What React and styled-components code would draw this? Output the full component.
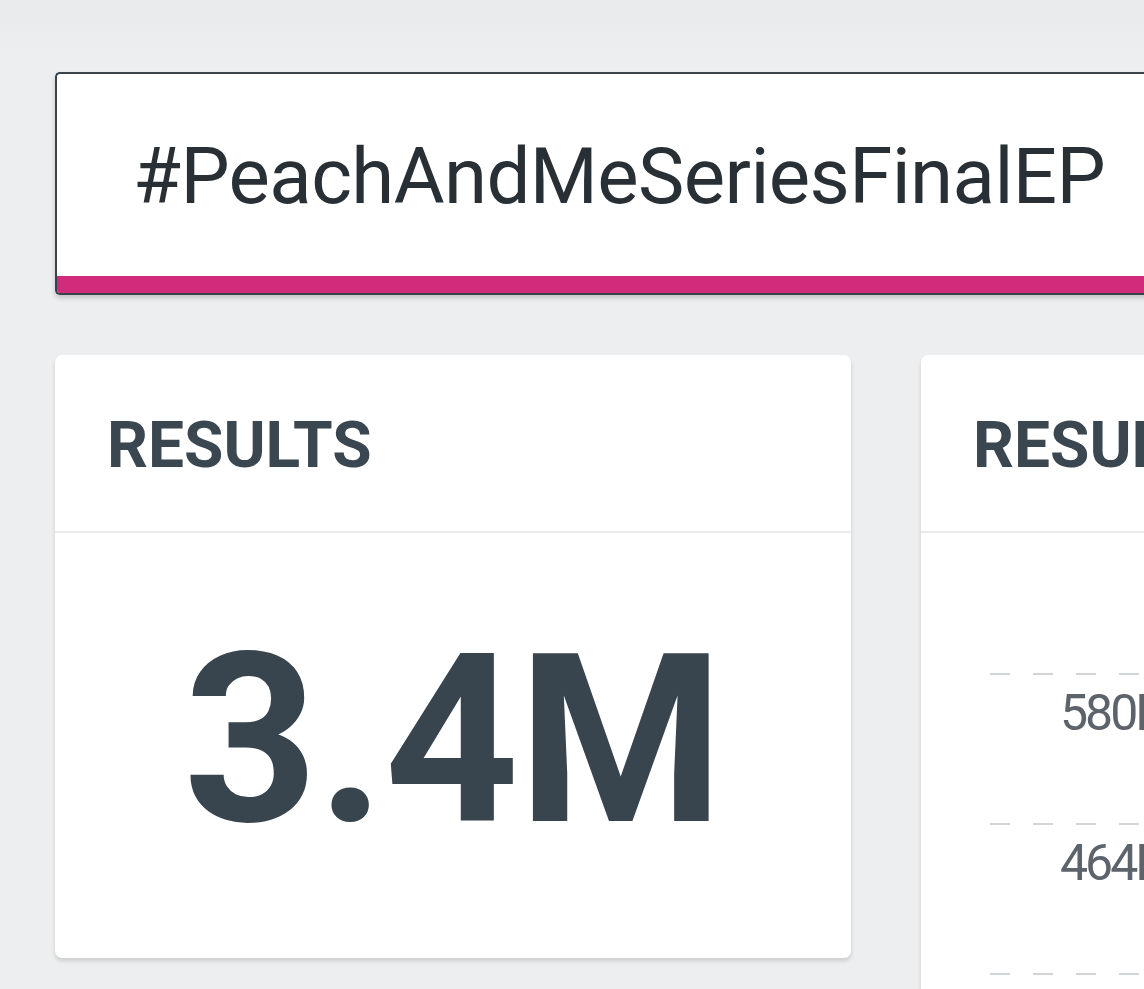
import React from 'react'
import styled, { createGlobalStyle } from 'styled-components'

const GlobalStyle = createGlobalStyle`
  html, body {
    margin: 0;
    padding: 0;
    background: #ecedef;
    overflow: hidden;
  }
  body {
    font-family: Roboto, "Liberation Sans", Arial, sans-serif;
  }
`

const Page = styled.div`
  width: 1800px;
  height: 989px;
  padding: 72px 0 0 55px;
  box-sizing: border-box;
  background: linear-gradient(180deg, #e9eaec 0px, #eceef0 60px, #eceef0 100%);
`

const SearchBox = styled.div`
  width: 1700px;
  height: 223px;
  box-sizing: border-box;
  border: 2px solid #39434b;
  border-right: none;
  border-radius: 5px 0 0 5px;
  background: #ffffff;
  display: flex;
  flex-direction: column;
  overflow: hidden;
  box-shadow: 0 3px 5px rgba(0, 0, 0, 0.18);
`

const SearchText = styled.div`
  flex: 1;
  display: flex;
  align-items: center;
  padding: 2px 0 0 76px;
  font-size: 78px;
  font-weight: 400;
  color: #283036;
  letter-spacing: -0.6px;
`

const AccentBar = styled.div`
  height: 17px;
  background: #d12c7b;
`

const CardRow = styled.div`
  display: flex;
  align-items: flex-start;
  gap: 70px;
  margin-top: 60px;
`

const Card = styled.div`
  width: 796px;
  height: ${(p) => p.$height}px;
  flex-shrink: 0;
  background: #ffffff;
  border-radius: 7px;
  box-shadow: 0 3px 4px rgba(0, 0, 0, 0.14);
  display: flex;
  flex-direction: column;
`

const CardHeader = styled.div`
  height: 178px;
  flex-shrink: 0;
  border-bottom: 2px solid #e9eaec;
  display: flex;
  align-items: center;
  padding: 4px 0 0 52px;
  box-sizing: border-box;
  font-size: 64px;
  font-weight: 700;
  color: #3a4650;
`

const BigValue = styled.div`
  flex: 1;
  display: flex;
  align-items: center;
  justify-content: center;
  padding: 10px 0 20px;
  font-size: 235px;
  font-weight: 700;
  color: #39454e;
  letter-spacing: -1px;
  line-height: 1;
`

const Chart = styled.div`
  flex: 1;
  padding: 140px 0 0 69px;
`

const GridRow = styled.div`
  height: 150px;
  background-image: linear-gradient(90deg, #d2d5d8 0, #d2d5d8 20px, transparent 20px, transparent 43px);
  background-size: 43px 2px;
  background-repeat: repeat-x;
  background-position: 0 0;
`

const AxisLabel = styled.div`
  padding: 15px 0 0 70px;
  font-size: 50px;
  line-height: 1;
  color: #5c636a;
  letter-spacing: -3px;
`

const ticks = ['580K', '464K']

export default function App() {
  return (
    <>
      <GlobalStyle />
      <Page>
        <SearchBox>
          <SearchText>#PeachAndMeSeriesFinalEP</SearchText>
          <AccentBar />
        </SearchBox>
        <CardRow>
          <Card $height={603}>
            <CardHeader>RESULTS</CardHeader>
            <BigValue>3.4M</BigValue>
          </Card>
          <Card $height={800}>
            <CardHeader>RESULTS</CardHeader>
            <Chart>
              {ticks.map((t) => (
                <GridRow key={t}>
                  <AxisLabel>{t}</AxisLabel>
                </GridRow>
              ))}
              <GridRow />
            </Chart>
          </Card>
        </CardRow>
      </Page>
    </>
  )
}
